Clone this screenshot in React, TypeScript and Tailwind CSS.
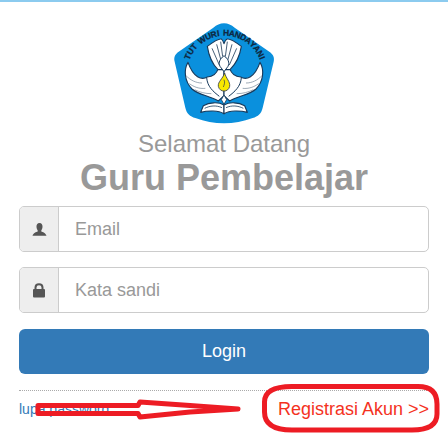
import React from "react";

const MOTTO = "TUT WURI HANDAYANI".split("");
const weight = (c: string) => (c === "I" ? 0.55 : c === "W" ? 1.35 : c === " " ? 0.55 : 1);
const TOTAL = MOTTO.reduce((sum, c) => sum + weight(c), 0);

function Wing() {
  return (
    <g>
      <path d="M114 182 C100 205 104 240 126 262 C145 280 180 282 205 298 L222 282 L222 200 L205 200 C200 215 190 225 172 226 C155 236 130 228 114 182 Z" fill="#fff" stroke="#173a5c" strokeWidth="3.4" strokeLinejoin="round" />
      <path d="M170 228 C172 255 190 270 208 284" fill="none" stroke="#173a5c" strokeWidth="3" />
      <path d="M108 222 C122 236 138 244 156 244 M118 246 C132 256 148 262 166 260 M134 264 C150 272 166 276 184 276" fill="none" stroke="#6d8193" strokeWidth="2" />
    </g>
  );
}

function BookHalf() {
  return (
    <g>
      <path d="M222 310 C205 300 178 302 160 312 L152 332 C175 326 205 326 222 336 Z" fill="#fff" stroke="#173a5c" strokeWidth="3.4" strokeLinejoin="round" />
      <path d="M216 318 C198 310 180 312 164 320" fill="none" stroke="#173a5c" strokeWidth="2.4" />
    </g>
  );
}

function Logo() {
  const cx = 224;
  const cy = 215;
  const r = 113;
  let used = 0;
  return (
    <svg width="108" height="108" viewBox="60 55 324 324" className="block">
      <path d="M222 65 C234 65 244 70 254 78 L358 150 C370 158 374 168 371 180 L338 318 C334 336 324 344 308 349 C252 370 192 370 136 349 C120 344 110 336 106 318 L74 180 C71 168 74 158 86 150 L190 78 C200 70 210 65 222 65 Z" fill="#0a90dd" />
      {MOTTO.map((c, i) => {
        const w = weight(c);
        const deg = -70 + ((used + w / 2) * 140) / TOTAL;
        used += w;
        const rad = (deg * Math.PI) / 180;
        const x = cx + r * Math.sin(rad);
        const y = cy - r * Math.cos(rad);
        return (
          <text
            key={i}
            x={x}
            y={y}
            textAnchor="middle"
            fontFamily="'Liberation Sans', sans-serif"
            fontSize="25"
            fontWeight="700"
            fill="#0e2740"
            stroke="#0e2740"
            strokeWidth="0.8"
            transform={`rotate(${deg} ${x} ${y})`}
          >
            {c}
          </text>
        );
      })}
      <Wing />
      <g transform="translate(444 0) scale(-1 1)"><Wing /></g>
      <path d="M172 134 C188 122 204 110 214 112 C218 114 220 120 222 126 C224 120 226 114 232 112 C242 110 258 122 274 134 C270 160 258 186 240 204 L204 204 C186 186 176 160 172 134 Z" fill="#fff" stroke="#173a5c" strokeWidth="3.4" strokeLinejoin="round" />
      <path d="M186 140 L208 190 M200 128 L214 180 M212 120 L218 165 M232 120 L226 165 M246 128 L232 180 M260 140 L238 190" stroke="#4a6178" strokeWidth="3" fill="none" />
      <path d="M222 162 C234 172 240 182 234 194 L222 210 L210 194 C204 182 210 172 222 162 Z" fill="#fff" stroke="#173a5c" strokeWidth="3" />
      <path d="M224 214 C228 230 241 240 239 254 C235 273 209 273 205 254 C203 240 218 232 224 214 Z" fill="#f7e800" stroke="#3a4048" strokeWidth="2.6" />
      <path d="M222 234 C226 244 222 250 220 256" fill="none" stroke="#3a4048" strokeWidth="2.2" />
      <path d="M222 280 L230 294 L222 308 L214 294 Z" fill="#fff" stroke="#173a5c" strokeWidth="2.6" />
      <BookHalf />
      <g transform="translate(444 0) scale(-1 1)"><BookHalf /></g>
    </svg>
  );
}

function UserIcon() {
  return (
    <svg width="15" height="15" viewBox="0 0 15 15">
      <path d="M7.5 1 C9.7 1 10.7 3 10.5 5 C10.4 6.6 9.8 7.8 9.3 8.4 L9.3 9.6 C10.8 10.3 13.6 10.8 14.5 13.8 L0.5 13.8 C1.4 10.8 4.2 10.3 5.7 9.6 L5.7 8.4 C5.2 7.8 4.6 6.6 4.5 5 C4.3 3 5.3 1 7.5 1 Z" fill="#555" />
    </svg>
  );
}

function LockIcon() {
  return (
    <svg width="14" height="15" viewBox="0 0 14 15">
      <path d="M3.5 6.5 V4.6 C3.5 2.6 5 1.2 7 1.2 C9 1.2 10.5 2.6 10.5 4.6 V6.5" fill="none" stroke="#555" strokeWidth="2" />
      <rect x="1" y="6" width="12" height="8.5" rx="1" fill="#555" />
    </svg>
  );
}

function Field({ icon, placeholder }: { icon: React.ReactNode; placeholder: string }) {
  return (
    <div className="flex h-[46px] rounded-[5px] border border-[#ccc] bg-white">
      <div className="flex w-[39px] items-center justify-center rounded-l-[4px] border-r border-[#ccc] bg-[#eee]">{icon}</div>
      <div className="flex flex-1 items-center pl-[16px] text-[18px] text-[#999]">{placeholder}</div>
    </div>
  );
}

export default function App() {
  return (
    <div className="relative h-[441px] w-[448px] overflow-hidden bg-white font-['Liberation_Sans',Arial,sans-serif]">
      <div className="h-[2px] bg-[#8ccbef]" />
      <div className="flex flex-col pl-[19px] pr-[19px]">
        <div className="mt-[18px] flex h-[104px] justify-center"><Logo /></div>
        <div className="mt-[6px] text-center text-[24px] leading-[28px] text-[#999]">Selamat Datang</div>
        <div className="text-center text-[36px] font-bold leading-[39px] text-[#999]">Guru Pembelajar</div>
        <div className="mt-[9px] flex flex-col gap-[15px]">
          <Field icon={<UserIcon />} placeholder="Email" />
          <Field icon={<LockIcon />} placeholder="Kata sandi" />
        </div>
        <div className="mt-[16px] flex h-[45px] items-center justify-center rounded-[6px] bg-[#337ab7] text-[18px] text-white">Login</div>
        <div className="mt-[16px] border-t border-dotted border-[#aaa]" />
        <div className="mt-[8px] flex items-center justify-between text-[14px] leading-[20px]">
          <span className="text-[#337ab7]">lupa password</span>
          <span className="text-[18px] text-[#f4321e]">Registrasi Akun &gt;&gt;</span>
        </div>
      </div>
      <svg className="absolute left-0 top-0" width="448" height="441" viewBox="0 0 448 441" fill="none" stroke="#ed1c24" strokeWidth="5">
        <path d="M38 405.5 H138 L140 402 L190 405.5 L238 409 L190 412 L140 417 L138 413.5 H38 Z" strokeLinejoin="round" />
        <path d="M292 386.5 H418 C430 386.5 437 392 437 404 V414 C437 425 428 430 412 430 H292 C274 430 264.5 424 264.5 412 V402 C264.5 392 274 386.5 292 386.5 Z" />
      </svg>
    </div>
  );
}
